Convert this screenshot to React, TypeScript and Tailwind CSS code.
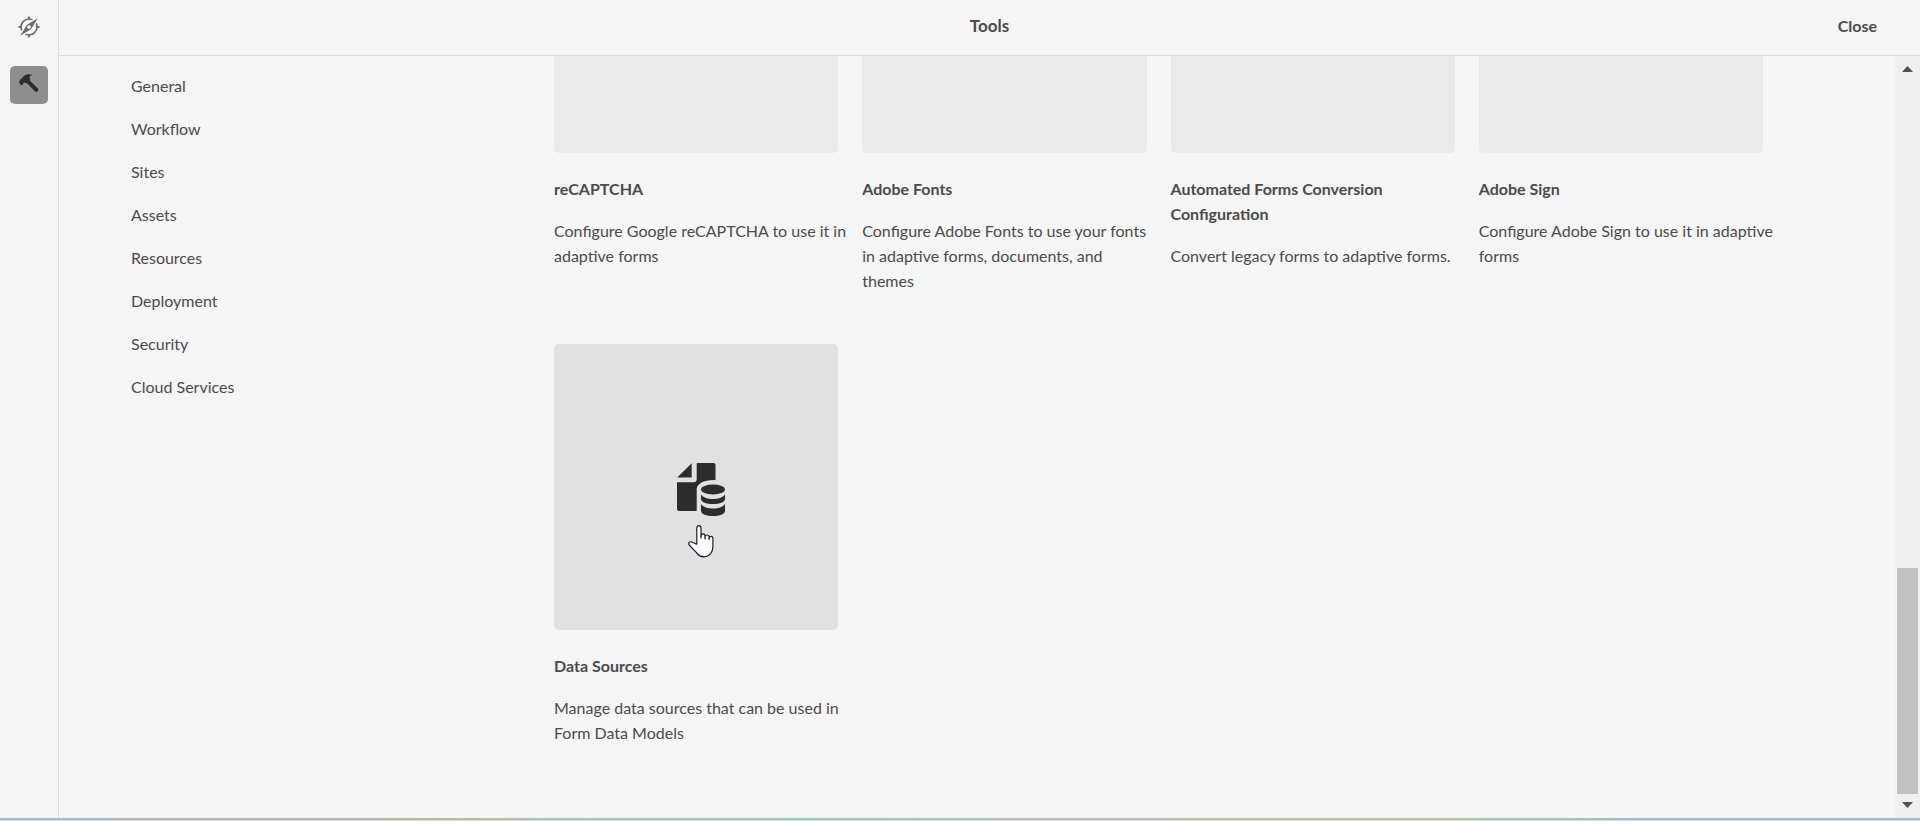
const NAV = ["General", "Workflow", "Sites", "Assets", "Resources", "Deployment", "Security", "Cloud Services"];

const CARDS = [
  { title: "reCAPTCHA", text: "Configure Google reCAPTCHA to use it in adaptive forms" },
  { title: "Adobe Fonts", text: "Configure Adobe Fonts to use your fonts in adaptive forms, documents, and\nthemes" },
  { title: "Automated Forms Conversion Configuration", text: "Convert legacy forms to adaptive forms." },
  { title: "Adobe Sign", text: "Configure Adobe Sign to use it in adaptive forms" },
  { title: "Data Sources", text: "Manage data sources that can be used in Form Data Models", active: true },
];

function CompassIcon() {
  return (
    <svg viewBox="0 0 22 22" className="size-[22px]" aria-hidden="true">
      <circle cx="11" cy="11" r="8" fill="none" stroke="#6e6e6e" strokeWidth="1.7" />
      <path d="M11 .5v3M11 18.500v3M.5 11h3M18.500 11h3" stroke="#6e6e6e" strokeWidth="1.8" />
      <path
        fillRule="evenodd"
        d="M19.800 2.200 13 13.200 2.200 19.800 9 8.800ZM11 9.200a1.800 1.800 0 1 0 0 3.600 1.800 1.800 0 0 0 0-3.600Z"
        fill="#6e6e6e"
        stroke="#f5f5f5"
        strokeWidth="3"
        paintOrder="stroke"
      />
      <circle cx="11" cy="11" r="1.500" fill="#f5f5f5" />
    </svg>
  );
}

function HammerIcon() {
  return (
    <svg viewBox="0 0 20 20" className="size-5" aria-hidden="true">
      <path
        d="M.1 8.600 1 5.800 2.800 4.600C4.500 1.900 6.400.400 9.300.300c1.600-.1 3.300.1 4.400.7-1.800.3-3 1.100-3.100 2.400 0 .9.200 1.500.7 2.200l-.4 1 8 8c.7.700.7 1.600.1 2.300l-.6.700c-.7.600-1.600.5-2.200-.1L7.800 8.900l-1 .3c-.8-.8-1.600-.9-2.300-.5-.6.500-.5 1.400-1 2.300l-1.500.2Z"
        fill="#2c2c2c"
      />
    </svg>
  );
}

function DataSourceIcon() {
  return (
    <svg viewBox="0 0 48 53" className="h-[53px] w-12" fill="#2c2c2c" aria-hidden="true">
      <path d="M14.700.3V14.500H.2Z" />
      <path d="M19.700 0h16.800a2 2 0 0 1 2 2v15C28 16.400 19.700 20.500 19.700 26v22H2a2 2 0 0 1-2-2V19.300h16.700a3 3 0 0 0 3-3Z" />
      <ellipse cx="36" cy="26.500" rx="12" ry="5" />
      <path d="M24 31.500c2 3.200 7 4.500 12 4.500s10-1.300 12-4.500V36c0 3-5.400 5-12 5s-12-2-12-5Z" />
      <path d="M24 41c2 3.200 7 4.500 12 4.500s10-1.300 12-4.500v7c0 3-5.400 5-12 5s-12-2-12-5Z" />
    </svg>
  );
}

function HandPointer() {
  return (
    <svg viewBox="0 0 26 33" className="absolute top-[181px] left-[134px] h-[33px] w-[26px]" aria-hidden="true">
      <path
        d="M8.800 19.200V3C8.800 1.500 9.700.700 10.900.700S13 1.500 13 3v8c0-1.500.8-2.200 2-2.200s2.100.8 2.100 2.200v1c.1-1.300.9-2 2-2s2 .8 2 2v1c.1-1.100.9-1.700 1.900-1.700s1.900.8 1.900 2v8.200c0 6.200-3.500 10.300-8.900 10.300-3.600 0-6-1.600-7.700-4.400L1.200 20c-.8-1.300-.5-2.400.4-3 .9-.5 2-.3 3.300.5Z"
        fill="#fff"
        stroke="#1c1c30"
        strokeWidth="1.200"
        strokeLinejoin="round"
      />
      <path d="M13 10.500v3M17.100 11.500V14.500M21.100 12.500V15" stroke="#1c1c30" strokeWidth="1.200" />
    </svg>
  );
}

export default function App() {
  return (
    <div className="flex h-screen flex-col bg-[#f5f5f5] font-['Lato',sans-serif] text-base text-[#4b4b4b]">
      <div className="flex min-h-0 flex-1">
        <aside className="flex w-[59px] shrink-0 flex-col items-center border-r border-[#dedede]">
          <button type="button" aria-label="Navigation" className="mt-2 flex size-[38px] items-center justify-center">
            <CompassIcon />
          </button>
          <button
            type="button"
            aria-label="Tools"
            className="mt-5 flex size-[38px] items-center justify-center rounded-[5px] bg-[#8e8e8e] pb-0.5"
          >
            <HammerIcon />
          </button>
        </aside>
        <div className="flex min-w-0 flex-1 flex-col">
          <header className="grid h-14 shrink-0 grid-cols-3 items-center border-b border-[#dedede] px-[43px] pb-[3px] font-bold">
            <h1 className="col-start-2 text-center text-[17px] leading-6">Tools</h1>
            <button type="button" className="justify-self-end font-bold">
              Close
            </button>
          </header>
          <div className="flex min-h-0 flex-1">
            <nav className="w-[423px] shrink-0 pt-2 pl-[72px]">
              {NAV.map((item) => (
                <a key={item} href="#" className="block leading-[43px]">
                  {item}
                </a>
              ))}
            </nav>
            <main className="mr-[120px] ml-[72px] min-w-0 flex-1 overflow-hidden pr-3">
              <div className="-mt-[189px] grid grid-cols-4 gap-x-6 gap-y-[51px]">
                {CARDS.map((card) => (
                  <a key={card.title} href="#" className="block leading-[25px]">
                    <div
                      className={
                        card.active
                          ? "relative flex h-[286px] items-center justify-center rounded-[5px] bg-[#e1e1e1] pt-1 pl-[10px]"
                          : "h-[286px] rounded-[5px] bg-[#eaeaea]"
                      }
                    >
                      {card.active && <DataSourceIcon />}
                      {card.active && <HandPointer />}
                    </div>
                    <h2 className="mt-[23px] font-bold">{card.title}</h2>
                    <p className="mt-[17px] -mr-3 whitespace-pre-line">{card.text}</p>
                  </a>
                ))}
              </div>
            </main>
            <div className="flex w-[25px] shrink-0 flex-col items-center bg-[#f0f0f0] py-[10px]">
              <svg viewBox="0 0 11 6" className="h-[6px] w-[11px]" aria-hidden="true">
                <path d="M0 6 5.500 0 11 6Z" fill="#505050" />
              </svg>
              <div className="flex-1" />
              <div className="mb-2 h-[226px] w-[21px] bg-[#c1c1c1]" />
              <svg viewBox="0 0 11 6" className="h-[6px] w-[11px]" aria-hidden="true">
                <path d="M0 0 5.500 6 11 0Z" fill="#505050" />
              </svg>
            </div>
          </div>
        </div>
      </div>
      <div className="flex h-[3px] shrink-0 flex-col justify-end bg-[linear-gradient(90deg,#a9b8c4_0%,#a9b8c4_5%,#b9b3b3_8%,#b7b3b0_17%,#b9b9a6_24%,#a8c0bb_31%,#a0c4c2_42%,#b3c0b3_52%,#b3c0ad_76%,#a2c0bd_83%,#a9b8c4_87%,#a9b8c4_100%)]">
        <div className="h-px bg-white/50" />
      </div>
    </div>
  );
}
